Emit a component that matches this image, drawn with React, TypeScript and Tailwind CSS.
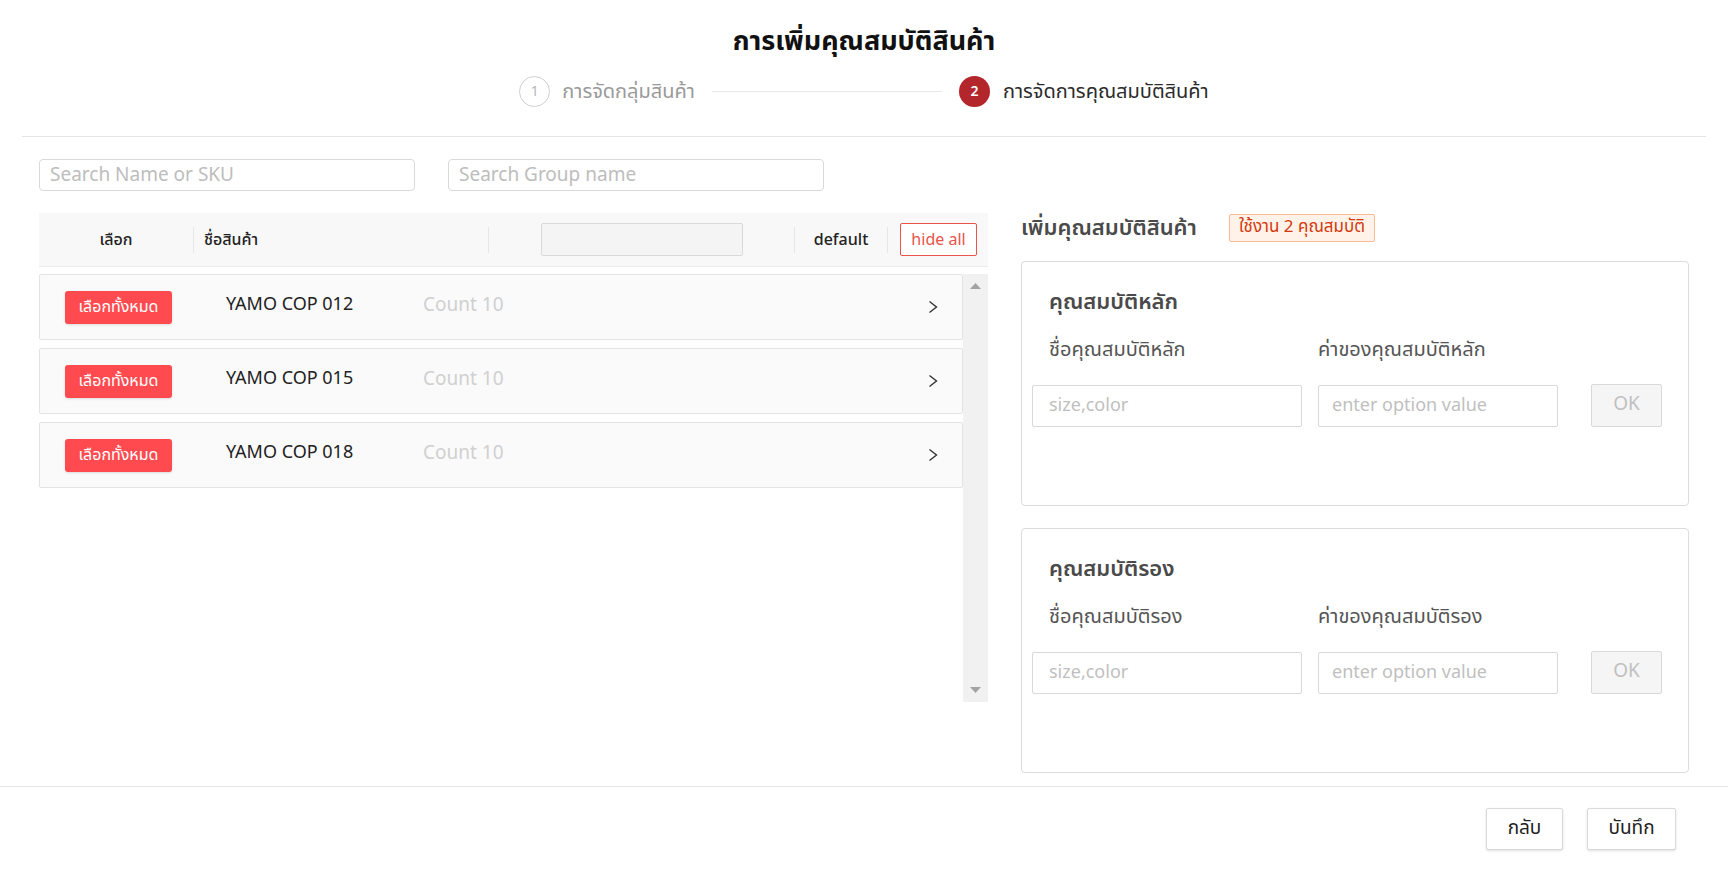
import React from 'react';

const rows = ['YAMO COP 012', 'YAMO COP 015', 'YAMO COP 018'];

function Stepper() {
  return (
    <div className="flex items-center justify-center pt-[15px]">
      <div className="flex items-center">
        <span className="flex h-[31px] w-[31px] items-center justify-center rounded-full border border-[#cfcfcf] text-[14px] text-[#b8b8b8]">
          1
        </span>
        <span className="ml-[12px] text-[20px] text-[#9a9a9a]">การจัดกลุ่มสินค้า</span>
      </div>
      <div className="mx-[17px] h-px w-[230px] bg-[#e8e8e8]" />
      <div className="flex items-center">
        <span className="flex h-[31px] w-[31px] items-center justify-center rounded-full bg-[#b3262c] text-[14px] font-semibold text-white">
          2
        </span>
        <span className="ml-[13px] text-[20px] text-[#2b2b2b]">การจัดการคุณสมบัติสินค้า</span>
      </div>
    </div>
  );
}

function ProductRow({ name }: { name: string }) {
  return (
    <div className="flex h-[66px] items-center rounded-[2px] border border-[#e3e3e3] bg-[#fafafa] pl-[25px] pr-[24px]">
      <button className="h-[33px] w-[107px] rounded-[3px] bg-[#ff4a4f] text-[16px] text-white shadow-sm">
        เลือกทั้งหมด
      </button>
      <span className="ml-[54px] -mt-[6px] w-[197px] text-[18px] text-[#222]">{name}</span>
      <span className="-mt-[2px] text-[19px] text-[#d0d0d0]">Count 10</span>
      <svg className="ml-auto" width="10" height="14" viewBox="0 0 10 14" fill="none">
        <path d="M1.5 1.5 L8.5 7 L1.5 12.5" stroke="#333" strokeWidth="1.4" />
      </svg>
    </div>
  );
}

function AttributeCard({ title, nameLabel, valueLabel }: { title: string; nameLabel: string; valueLabel: string }) {
  return (
    <div className="h-[245px] rounded-[4px] border border-[#dcdcdc] px-[10px] pt-[25px]">
      <div className="pl-[17px] text-[22px] font-semibold leading-[32px] text-[#4a4a4a]">{title}</div>
      <div className="mt-[16px] flex pl-[17px] text-[20px] leading-[30px] text-[#555]">
        <span className="w-[269px]">{nameLabel}</span>
        <span>{valueLabel}</span>
      </div>
      <div className="mt-[19px] flex items-center">
        <input
          placeholder="size,color"
          className="h-[42px] w-[270px] rounded-[2px] border border-[#d9d9d9] px-[16px] text-[18px] outline-none placeholder:text-[#bfbfbf]"
        />
        <input
          placeholder="enter option value"
          className="ml-[16px] h-[42px] w-[240px] rounded-[2px] border border-[#d9d9d9] px-[13px] text-[18px] outline-none placeholder:text-[#bfbfbf]"
        />
        <button className="ml-[33px] h-[43px] w-[71px] rounded-[2px] border border-[#d9d9d9] bg-[#f5f5f5] text-[19px] text-[#c0c0c0]">
          OK
        </button>
      </div>
    </div>
  );
}

export default function App() {
  return (
    <div
      className="flex h-[873px] w-full flex-col overflow-hidden bg-white text-[#222]"
      style={{ fontFamily: '"Noto Sans Thai", "Noto Sans", "Liberation Sans", sans-serif' }}
    >
      {/* header */}
      <div className="mx-[22px] h-[137px] border-b border-[#e5e5e5] pt-[23px] text-center">
        <h1 className="text-[27px] font-bold leading-[38px] text-[#111]">การเพิ่มคุณสมบัติสินค้า</h1>
        <Stepper />
      </div>

      {/* body */}
      <div className="flex flex-1 pl-[39px] pr-[39px] pt-[22px]">
        <div className="flex w-[949px] flex-col">
          <div className="flex gap-[33px]">
            <input
              placeholder="Search Name or SKU"
              className="h-[32px] w-[376px] rounded-[4px] border border-[#d9d9d9] px-[10px] text-[19px] outline-none placeholder:text-[#bdbdbd]"
            />
            <input
              placeholder="Search Group name"
              className="h-[32px] w-[376px] rounded-[4px] border border-[#d9d9d9] px-[10px] text-[19px] outline-none placeholder:text-[#bdbdbd]"
            />
          </div>

          <div className="mt-[22px] flex h-[54px] items-center border-b border-[#ececec] bg-[#f8f8f8] text-[16px] font-medium">
            <span className="w-[154px] text-center">เลือก</span>
            <span className="h-[26px] w-px bg-[#e6e6e6]" />
            <span className="ml-[10px] w-[284px]">ชื่อสินค้า</span>
            <span className="h-[26px] w-px bg-[#e6e6e6]" />
            <div className="ml-[52px] h-[33px] w-[202px] rounded-[2px] border border-[#d9d9d9] bg-[#f4f4f4]" />
            <span className="ml-[51px] h-[26px] w-px bg-[#e6e6e6]" />
            <span className="w-[92px] text-center">default</span>
            <span className="h-[26px] w-px bg-[#e6e6e6]" />
            <button className="ml-[12px] h-[33px] w-[77px] rounded-[2px] border border-[#e8534a] bg-white text-[16px] font-normal text-[#e8534a]">
              hide all
            </button>
          </div>

          <div className="mt-[7px] flex h-[428px]">
            <div className="flex flex-1 flex-col gap-[8px]">
              {rows.map(r => (
                <ProductRow key={r} name={r} />
              ))}
            </div>
            <div className="flex w-[25px] flex-col items-center justify-between bg-[#f1f1f1] py-[9px]">
              <svg width="11" height="6" viewBox="0 0 11 6">
                <path d="M0 6 L5.5 0 L11 6 Z" fill="#a3a3a3" />
              </svg>
              <svg width="11" height="6" viewBox="0 0 11 6">
                <path d="M0 0 L5.5 6 L11 0 Z" fill="#a3a3a3" />
              </svg>
            </div>
          </div>
        </div>

        <div className="ml-[33px] flex flex-1 flex-col pt-[55px]">
          <div className="flex h-[28px] items-center">
            <span className="text-[22px] font-semibold text-[#4a4a4a]">เพิ่มคุณสมบัติสินค้า</span>
            <span className="ml-[32px] flex h-[28px] items-center rounded-[2px] border border-[#ffbb96] bg-[#fff2e8] px-[9px] text-[17px] text-[#d4380d]">
              ใช้งาน 2 คุณสมบัติ
            </span>
          </div>
          <div className="mt-[19px] flex flex-col gap-[22px]">
            <AttributeCard title="คุณสมบัติหลัก" nameLabel="ชื่อคุณสมบัติหลัก" valueLabel="ค่าของคุณสมบัติหลัก" />
            <AttributeCard title="คุณสมบัติรอง" nameLabel="ชื่อคุณสมบัติรอง" valueLabel="ค่าของคุณสมบัติรอง" />
          </div>
        </div>
      </div>

      {/* footer */}
      <div className="flex h-[87px] items-start justify-end gap-[24px] border-t border-[#e5e5e5] pr-[52px] pt-[21px]">
        <button className="h-[42px] w-[77px] rounded-[2px] border border-[#d9d9d9] bg-white text-[19px] text-[#222] shadow-sm">
          กลับ
        </button>
        <button className="h-[42px] w-[89px] rounded-[2px] border border-[#d9d9d9] bg-white text-[19px] text-[#222] shadow-sm">
          บันทึก
        </button>
      </div>
    </div>
  );
}
